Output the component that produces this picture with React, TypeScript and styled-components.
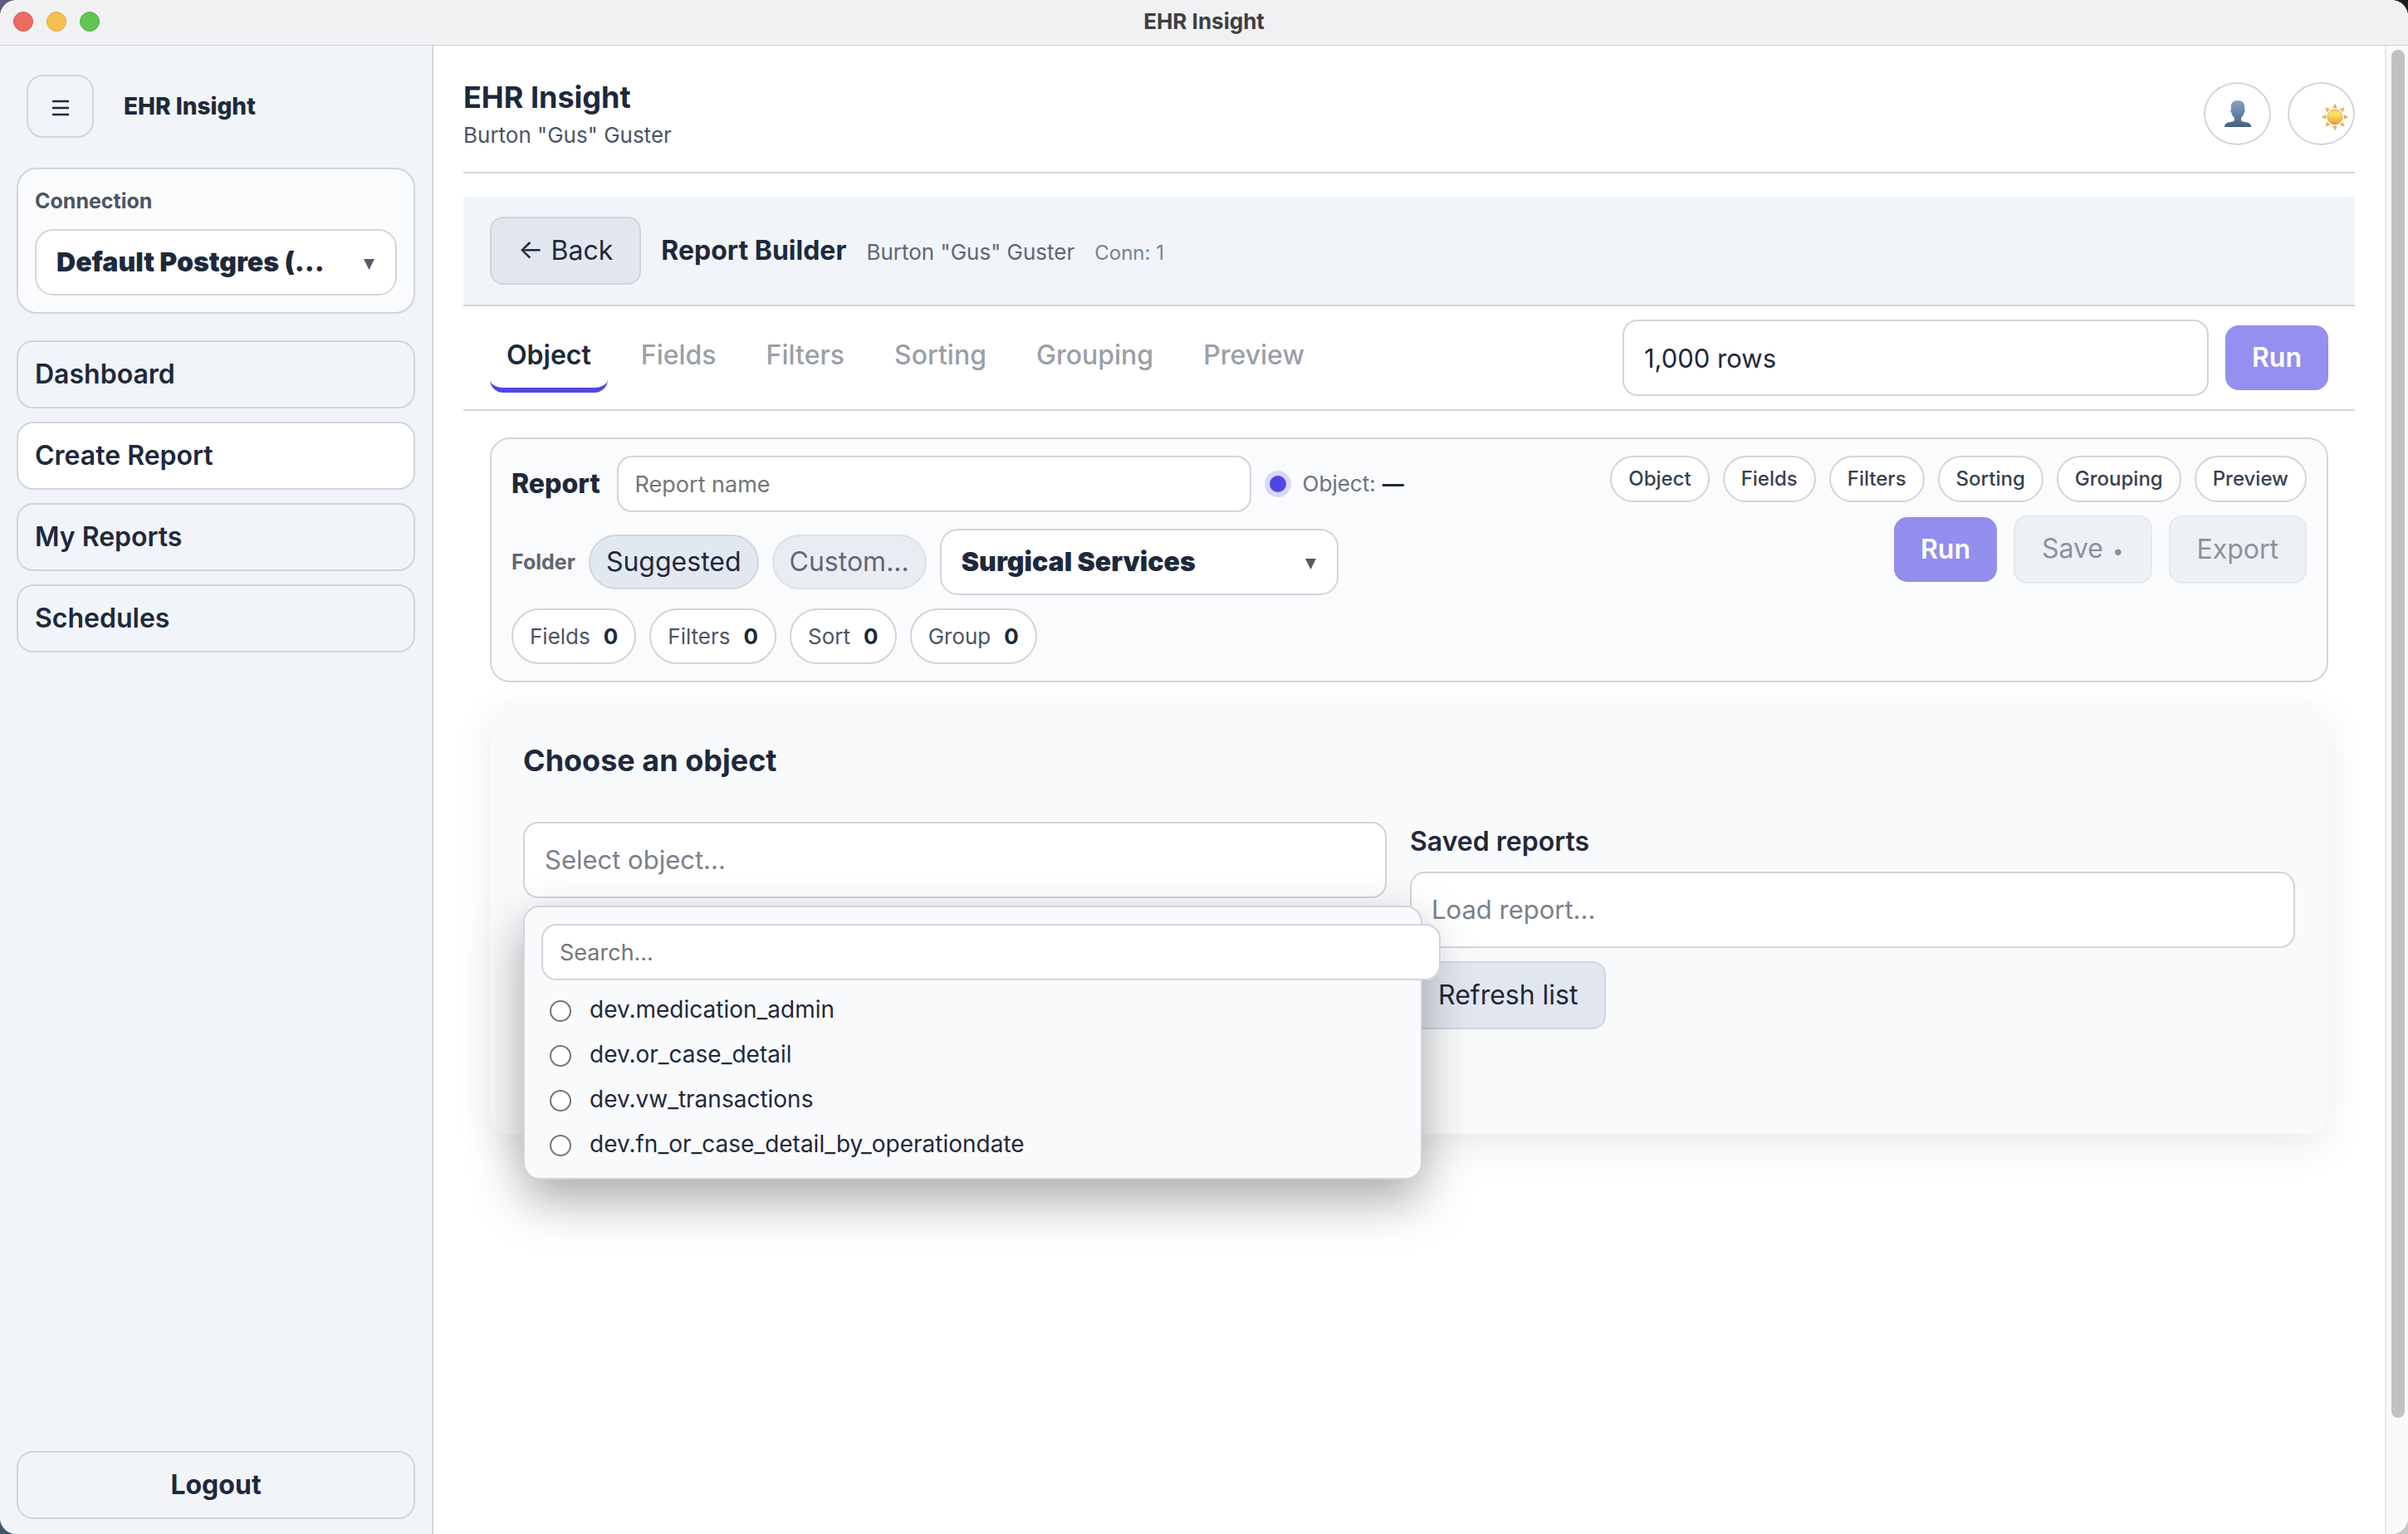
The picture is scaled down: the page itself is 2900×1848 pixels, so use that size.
import React, { useState } from "react";
import styled, { createGlobalStyle, css } from "styled-components";

const ink = "#1e293b";
const line = "#d1d5db";
const muted = "#6b7280";
const accent = "#4f46e5";

const GlobalStyle = createGlobalStyle`
  *, *::before, *::after { box-sizing: border-box; }
  body {
    margin: 0;
    background:
      linear-gradient(#5d5b83, #5d5b83) 0 0 / 50% 50% no-repeat,
      linear-gradient(#1c1c1c, #1c1c1c) 100% 0 / 50% 50% no-repeat,
      linear-gradient(#475569, #475569) 0 100% / 50% 50% no-repeat,
      #c8c8c8;
    color: ${ink};
    font: 400 32px/38px Inter, "Liberation Sans", sans-serif;
  }
  button, input, select { font: inherit; color: inherit; margin: 0; }
  h1, h2, h3, p { margin: 0; }
`;

const Window = styled.div`
  display: flex;
  flex-direction: column;
  height: 100vh;
  overflow: hidden;
  border-radius: 20px;
  background: #fff;
`;

const TitleBar = styled.header`
  display: grid;
  grid-template-columns: 1fr auto 1fr;
  align-items: center;
  height: 55px;
  flex: none;
  padding: 0 16px 3px;
  background: #f1f1f3;
  border-bottom: 1px solid #d0d1d3;
  font-size: 26px;
  font-weight: 700;
  line-height: 32px;
  color: #3f3f42;
`;

const Lights = styled.div`
  display: flex;
  gap: 16px;
`;

const Light = styled.span<{ $fill: string; $edge: string }>`
  width: 24px;
  height: 24px;
  border-radius: 50%;
  background: ${(p) => p.$fill};
  border: 1px solid ${(p) => p.$edge};
`;

const Body = styled.div`
  display: flex;
  flex: 1;
  min-height: 0;
`;

const Sidebar = styled.aside`
  display: flex;
  flex-direction: column;
  width: 522px;
  flex: none;
  padding: 35px 20px 18px;
  background: #f1f5fa;
  border-right: 2px solid ${line};
`;

const Brand = styled.div`
  display: flex;
  align-items: center;
  gap: 36px;
  padding-left: 12px;
  margin-bottom: 36px;
  font-size: 28px;
  font-weight: 800;
`;

const MenuToggle = styled.button`
  display: flex;
  align-items: center;
  justify-content: center;
  width: 81px;
  height: 76px;
  padding: 4px 0 0;
  border: 2px solid ${line};
  border-radius: 20px;
  background: transparent;
`;

const ConnectionCard = styled.section`
  display: flex;
  flex-direction: column;
  gap: 16px;
  padding: 20px;
  margin-bottom: 32px;
  border: 2px solid ${line};
  border-radius: 24px;
  background: #fafbfd;
`;

const SmallLabel = styled.label<{ $color: string }>`
  font-size: 25px;
  line-height: 36px;
  font-weight: 700;
  color: ${(p) => p.$color};
`;

const SelectWrap = styled.div<{ $width?: number }>`
  display: grid;
  align-items: center;
  width: ${(p) => (p.$width ? `${p.$width}px` : "100%")};
  > * { grid-area: 1 / 1; }
  > svg { justify-self: end; margin: 4px 27px 0 0; pointer-events: none; }
`;

const BoldSelect = styled.select`
  appearance: none;
  width: 100%;
  height: 80px;
  padding: 0 72px 0 24px;
  border: 2px solid ${line};
  border-radius: 22px;
  background: #fff;
  font-weight: 900;
  text-overflow: ellipsis;
`;

const Nav = styled.nav`
  display: flex;
  flex-direction: column;
  gap: 16px;
`;

const NavLink = styled.a<{ $active?: boolean }>`
  display: flex;
  align-items: center;
  height: 82px;
  padding: 0 20px;
  border: 2px solid ${line};
  border-radius: 20px;
  background: ${(p) => (p.$active ? "#fff" : "transparent")};
  color: ${ink};
  font-weight: 600;
  text-decoration: none;
`;

const Logout = styled.button`
  height: 82px;
  margin-top: auto;
  border: 2px solid ${line};
  border-radius: 20px;
  background: transparent;
  font-weight: 700;
`;

const Main = styled.main`
  flex: 1;
  min-width: 0;
  padding: 0 36px;
`;

const PageHeader = styled.div`
  display: flex;
  align-items: center;
  justify-content: space-between;
  height: 154px;
  padding-top: 12px;
  margin-bottom: 28px;
  border-bottom: 2px solid ${line};
`;

const PageTitle = styled.h1`
  font-size: 36px;
  line-height: 44px;
  font-weight: 700;
`;

const Person = styled.p<{ $color: string }>`
  font-size: 26px;
  line-height: 32px;
  color: ${(p) => p.$color};
`;

const HeaderText = styled.div`
  display: flex;
  flex-direction: column;
  gap: 8px;
`;

const Cluster = styled.div<{ $gap: number }>`
  display: flex;
  align-items: center;
  gap: ${(p) => p.$gap}px;
`;

const RoundButton = styled.button<{ $shifted?: boolean }>`
  display: flex;
  align-items: center;
  justify-content: center;
  width: 81px;
  height: 76px;
  padding: ${(p) => (p.$shifted ? "8px 0 0 32px" : "0")};
  border: 2px solid ${line};
  border-radius: 50%;
  background: #fff;
`;

const BuilderBar = styled.div`
  display: flex;
  align-items: center;
  gap: 24px;
  padding: 24px 32px;
  background: #f1f5fa;
  border-bottom: 2px solid ${line};
`;

const BuilderTitle = styled.h2`
  font-size: 32px;
  font-weight: 700;
`;

const ConnNote = styled.span`
  font-size: 24px;
  line-height: 32px;
  color: #7b818d;
`;

const Baseline = styled.div`
  display: flex;
  align-items: baseline;
  gap: 24px;
`;

const Button = styled.button<{ $kind?: "primary" }>`
  height: 82px;
  padding: 0 32px;
  border: 2px solid ${line};
  border-radius: 16px;
  background: #e2e7ef;
  font-weight: 400;
  white-space: nowrap;
  small { margin-left: 2px; font-size: 24px; }
  ${(p) =>
    p.$kind === "primary" &&
    css`
      height: 78px;
      border: 0;
      background: ${accent};
      color: #fff;
      font-weight: 600;
    `}
  &:disabled { opacity: ${(p) => (p.$kind === "primary" ? 0.6 : 0.5)}; }
`;

const TabRow = styled.div`
  display: flex;
  align-items: center;
  justify-content: space-between;
  padding: 16px 32px;
  border-bottom: 2px solid ${line};
`;

const Tab = styled.button<{ $active?: boolean }>`
  height: 84px;
  padding: 0 20px;
  border: 0 solid transparent;
  border-bottom: 6px solid ${(p) => (p.$active ? accent : "transparent")};
  border-radius: 16px;
  background: transparent;
  font-weight: ${(p) => (p.$active ? 600 : 500)};
  color: ${(p) => (p.$active ? ink : "#9a9fa8")};
`;

const RowLimit = styled.input`
  width: 706px;
  height: 92px;
  padding: 0 24px;
  border: 2px solid ${line};
  border-radius: 18px;
  background: #fff;
  font-size: 31px;
`;

const Panels = styled.div`
  display: flex;
  flex-direction: column;
  gap: 24px;
  padding: 32px 32px 0;
`;

const ReportCard = styled.section`
  display: flex;
  justify-content: space-between;
  padding: 20px 24px;
  border: 2px solid ${line};
  border-radius: 24px;
  background: #fafbfd;
`;

const Stack = styled.div<{ $end?: boolean }>`
  display: flex;
  flex-direction: column;
  align-items: ${(p) => (p.$end ? "flex-end" : "stretch")};
  gap: 16px;
`;

const NameRow = styled.div`
  display: flex;
  align-items: center;
  gap: 16px;
  padding-bottom: 4px;
`;

const ReportLabel = styled.label`
  font-weight: 800;
  margin-right: 4px;
`;

const TextInput = styled.input<{ $width: string }>`
  width: ${(p) => p.$width};
  flex: none;
  height: 68px;
  padding: 0 20px;
  border: 2px solid ${line};
  border-radius: 18px;
  background: #fff;
  font-size: 27px;
  &::placeholder { color: #757575; opacity: 1; }
`;

const ObjectState = styled.span`
  display: flex;
  align-items: center;
  font-size: 26px;
  color: ${muted};
  &::before {
    content: "";
    width: 20px;
    height: 20px;
    margin: 0 20px 0 6px;
    border-radius: 50%;
    background: ${accent};
    box-shadow: 0 0 0 6px #dad8f8;
  }
  strong { margin-left: 8px; font-weight: 700; color: ${ink}; }
`;

const FolderPill = styled.button<{ $dim?: boolean }>`
  height: 66px;
  padding: 0 19px;
  border: 2px solid ${line};
  border-radius: 33px;
  background: #e2e8f0;
  opacity: ${(p) => (p.$dim ? 0.7 : 1)};
`;

const CountPill = styled.span`
  display: flex;
  align-items: center;
  gap: 16px;
  height: 67px;
  padding: 0 20px;
  border: 2px solid ${line};
  border-radius: 34px;
  background: #fff;
  font-size: 26px;
  color: #4b5563;
  strong { font-weight: 700; color: ${ink}; }
`;

const StepPill = styled.button`
  height: 56px;
  padding: 0 20px;
  border: 2px solid ${line};
  border-radius: 28px;
  background: #fff;
  font-size: 24px;
  font-weight: 500;
  color: #374151;
`;

const ObjectCard = styled.section`
  padding: 48px 40px 126px;
  border-radius: 24px;
  background: #f9fafc;
  box-shadow: 0 16px 48px rgba(0, 0, 0, 0.08);
`;

const CardTitle = styled.h2`
  font-size: 36px;
  line-height: 44px;
  font-weight: 700;
  margin-bottom: 52px;
`;

const Columns = styled.div`
  display: grid;
  grid-template-columns: 1040fr 1066fr;
  column-gap: 28px;
  align-items: start;
`;

const Picker = styled.div`
  position: relative;
`;

const PickerButton = styled.button`
  display: block;
  width: 100%;
  height: 92px;
  padding: 0 24px;
  border: 2px solid ${line};
  border-radius: 18px;
  background: #fff;
  color: #7b818d;
  font-size: 31px;
  text-align: left;
`;

const Popup = styled.div`
  position: absolute;
  z-index: 2;
  top: 101px;
  left: 0;
  width: 1083px;
  padding: 20px 20px 14px;
  border: 2px solid ${line};
  border-radius: 20px;
  background: #f9fafc;
  box-shadow: 0 24px 60px rgba(0, 0, 0, 0.34);
`;

const Options = styled.div`
  display: flex;
  flex-direction: column;
  padding: 8px 10px 0;
`;

const Option = styled.label`
  display: flex;
  align-items: center;
  gap: 22px;
  height: 54px;
  font-size: 28px;
  line-height: 54px;
  input {
    appearance: none;
    width: 26px;
    height: 26px;
    margin-top: 4px;
    border: 2px solid #767676;
    border-radius: 50%;
    background: #fff;
  }
`;

const SavedReports = styled.div`
  display: flex;
  flex-direction: column;
  align-items: flex-start;
  gap: 16px;
`;

const SavedTitle = styled.h3`
  padding-top: 4px;
  font-size: 32px;
  line-height: 40px;
  font-weight: 600;
`;

const ScrollTrack = styled.div`
  width: 28px;
  flex: none;
  padding: 5px 4px 140px 6px;
  background: #fafafa;
  border-left: 2px solid #e7e7e7;
`;

const ScrollThumb = styled.div`
  height: 100%;
  border-radius: 8px;
  background: #c1c1c1;
`;

const Caret = () => (
  <svg width="13" height="13" viewBox="0 0 13 13" aria-hidden="true">
    <path d="M0 0h13L6.500 13z" fill="#545b68" />
  </svg>
);

const MenuIcon = () => (
  <svg width="20" height="20" viewBox="0 0 20 20" aria-hidden="true">
    <path d="M0 2h20M0 10h20M0 18h20" stroke={ink} strokeWidth="2.500" />
  </svg>
);

const PersonIcon = () => (
  <svg width="32" height="32" viewBox="0 0 32 32" aria-hidden="true">
    <defs>
      <linearGradient id="person" x1="0" y1="0" x2="0" y2="1">
        <stop offset="0" stopColor="#84a5c4" />
        <stop offset="1" stopColor="#47607f" />
      </linearGradient>
    </defs>
    <path
      d="M16 0C10.500 0 7.800 3 7.800 7.500L8 11c-1 0-1 3 .6 4.200C9.200 18 10.500 19.800 12 21v2c0 3-4 2.600-7.500 3.600C1.500 27.500 0 29 0 32h32c0-3-1.500-4.500-4.500-5.400C24 25.600 20 26 20 23v-2c1.500-1.200 2.800-3 3.400-5.800C25 14 25 11 24 11l.2-3.500C24.200 3 21.500 0 16 0z"
      fill="url(#person)"
    />
  </svg>
);

const SunIcon = () => (
  <svg width="32" height="32" viewBox="-16 -16 32 32" aria-hidden="true">
    <defs>
      <linearGradient id="sun" x1="0" y1="0" x2="0" y2="1">
        <stop offset="0" stopColor="#f3cf4c" />
        <stop offset="0.300" stopColor="#f9e468" />
        <stop offset="1" stopColor="#e39a35" />
      </linearGradient>
    </defs>
    {[0, 45, 90, 135, 180, 225, 270, 315].map((a) => (
      <path key={a} d="M-2.200-11L0-15.800 2.200-11z" fill="#f0b83c" stroke="#d9963a" strokeWidth="0.500" transform={`rotate(${a})`} />
    ))}
    <circle r="9" fill="url(#sun)" stroke="#d98f34" strokeWidth="0.800" />
  </svg>
);

const navItems = ["Dashboard", "Create Report", "My Reports", "Schedules"];
const steps = ["Object", "Fields", "Filters", "Sorting", "Grouping", "Preview"];
const counts = ["Fields", "Filters", "Sort", "Group"];
const objects = [
  "dev.medication_admin",
  "dev.or_case_detail",
  "dev.vw_transactions",
  "dev.fn_or_case_detail_by_operationdate",
];

export default function App() {
  const [tab, setTab] = useState("Object");
  const [limit, setLimit] = useState("1,000 rows");

  return (
    <>
      <GlobalStyle />
      <Window>
        <TitleBar>
          <Lights>
            <Light $fill="#ed6b60" $edge="#d8564b" />
            <Light $fill="#f5bf4f" $edge="#dba63b" />
            <Light $fill="#62c655" $edge="#4eaf41" />
          </Lights>
          <span>EHR Insight</span>
        </TitleBar>
        <Body>
          <Sidebar>
            <Brand>
              <MenuToggle aria-label="Toggle menu"><MenuIcon /></MenuToggle>
              <span>EHR Insight</span>
            </Brand>
            <ConnectionCard>
              <SmallLabel htmlFor="connection" $color="#4b5563">Connection</SmallLabel>
              <SelectWrap>
                <BoldSelect id="connection"><option>Default Postgres (...</option></BoldSelect>
                <Caret />
              </SelectWrap>
            </ConnectionCard>
            <Nav>
              {navItems.map((item) => (
                <NavLink key={item} href="#" $active={item === "Create Report"}>{item}</NavLink>
              ))}
            </Nav>
            <Logout>Logout</Logout>
          </Sidebar>
          <Main>
            <PageHeader>
              <HeaderText>
                <PageTitle>EHR Insight</PageTitle>
                <Person $color="#4b5563">Burton "Gus" Guster</Person>
              </HeaderText>
              <Cluster $gap={20}>
                <RoundButton aria-label="Account"><PersonIcon /></RoundButton>
                <RoundButton aria-label="Theme" $shifted><SunIcon /></RoundButton>
              </Cluster>
            </PageHeader>
            <BuilderBar>
              <Button>← Back</Button>
              <Baseline>
                <BuilderTitle>Report Builder</BuilderTitle>
                <Person $color="#5f6673">Burton "Gus" Guster</Person>
                <ConnNote>Conn: 1</ConnNote>
              </Baseline>
            </BuilderBar>
            <TabRow>
              <Cluster $gap={20} role="tablist">
                {steps.map((s) => (
                  <Tab key={s} role="tab" aria-selected={s === tab} $active={s === tab} onClick={() => setTab(s)}>{s}</Tab>
                ))}
              </Cluster>
              <Cluster $gap={20}>
                <RowLimit aria-label="Row limit" value={limit} onChange={(e) => setLimit(e.target.value)} />
                <Button $kind="primary" disabled>Run</Button>
              </Cluster>
            </TabRow>
            <Panels>
              <ReportCard>
                <Stack>
                  <NameRow>
                    <ReportLabel htmlFor="report-name">Report</ReportLabel>
                    <TextInput id="report-name" placeholder="Report name" $width="764px" />
                    <ObjectState>Object: <strong>—</strong></ObjectState>
                  </NameRow>
                  <Cluster $gap={16}>
                    <SmallLabel htmlFor="folder" $color="#5f6673">Folder</SmallLabel>
                    <FolderPill>Suggested</FolderPill>
                    <FolderPill $dim>Custom...</FolderPill>
                    <SelectWrap $width={480}>
                      <BoldSelect id="folder"><option>Surgical Services</option></BoldSelect>
                      <Caret />
                    </SelectWrap>
                  </Cluster>
                  <Cluster $gap={16}>
                    {counts.map((c) => (
                      <CountPill key={c}>{c} <strong>0</strong></CountPill>
                    ))}
                  </Cluster>
                </Stack>
                <Stack $end>
                  <Cluster $gap={16}>
                    {steps.map((s) => <StepPill key={s}>{s}</StepPill>)}
                  </Cluster>
                  <Cluster $gap={20}>
                    <Button $kind="primary" disabled>Run</Button>
                    <Button disabled>Save <small>•</small></Button>
                    <Button disabled>Export</Button>
                  </Cluster>
                </Stack>
              </ReportCard>
              <ObjectCard>
                <CardTitle>Choose an object</CardTitle>
                <Columns>
                  <Picker>
                    <PickerButton aria-expanded="true">Select object...</PickerButton>
                    <Popup>
                      <TextInput aria-label="Search objects" placeholder="Search…" $width="1083px" />
                      <Options>
                        {objects.map((o) => (
                          <Option key={o}><input type="radio" name="object" />{o}</Option>
                        ))}
                      </Options>
                    </Popup>
                  </Picker>
                  <SavedReports>
                    <SavedTitle>Saved reports</SavedTitle>
                    <PickerButton>Load report...</PickerButton>
                    <Button>Refresh list</Button>
                  </SavedReports>
                </Columns>
              </ObjectCard>
            </Panels>
          </Main>
          <ScrollTrack><ScrollThumb /></ScrollTrack>
        </Body>
      </Window>
    </>
  );
}
